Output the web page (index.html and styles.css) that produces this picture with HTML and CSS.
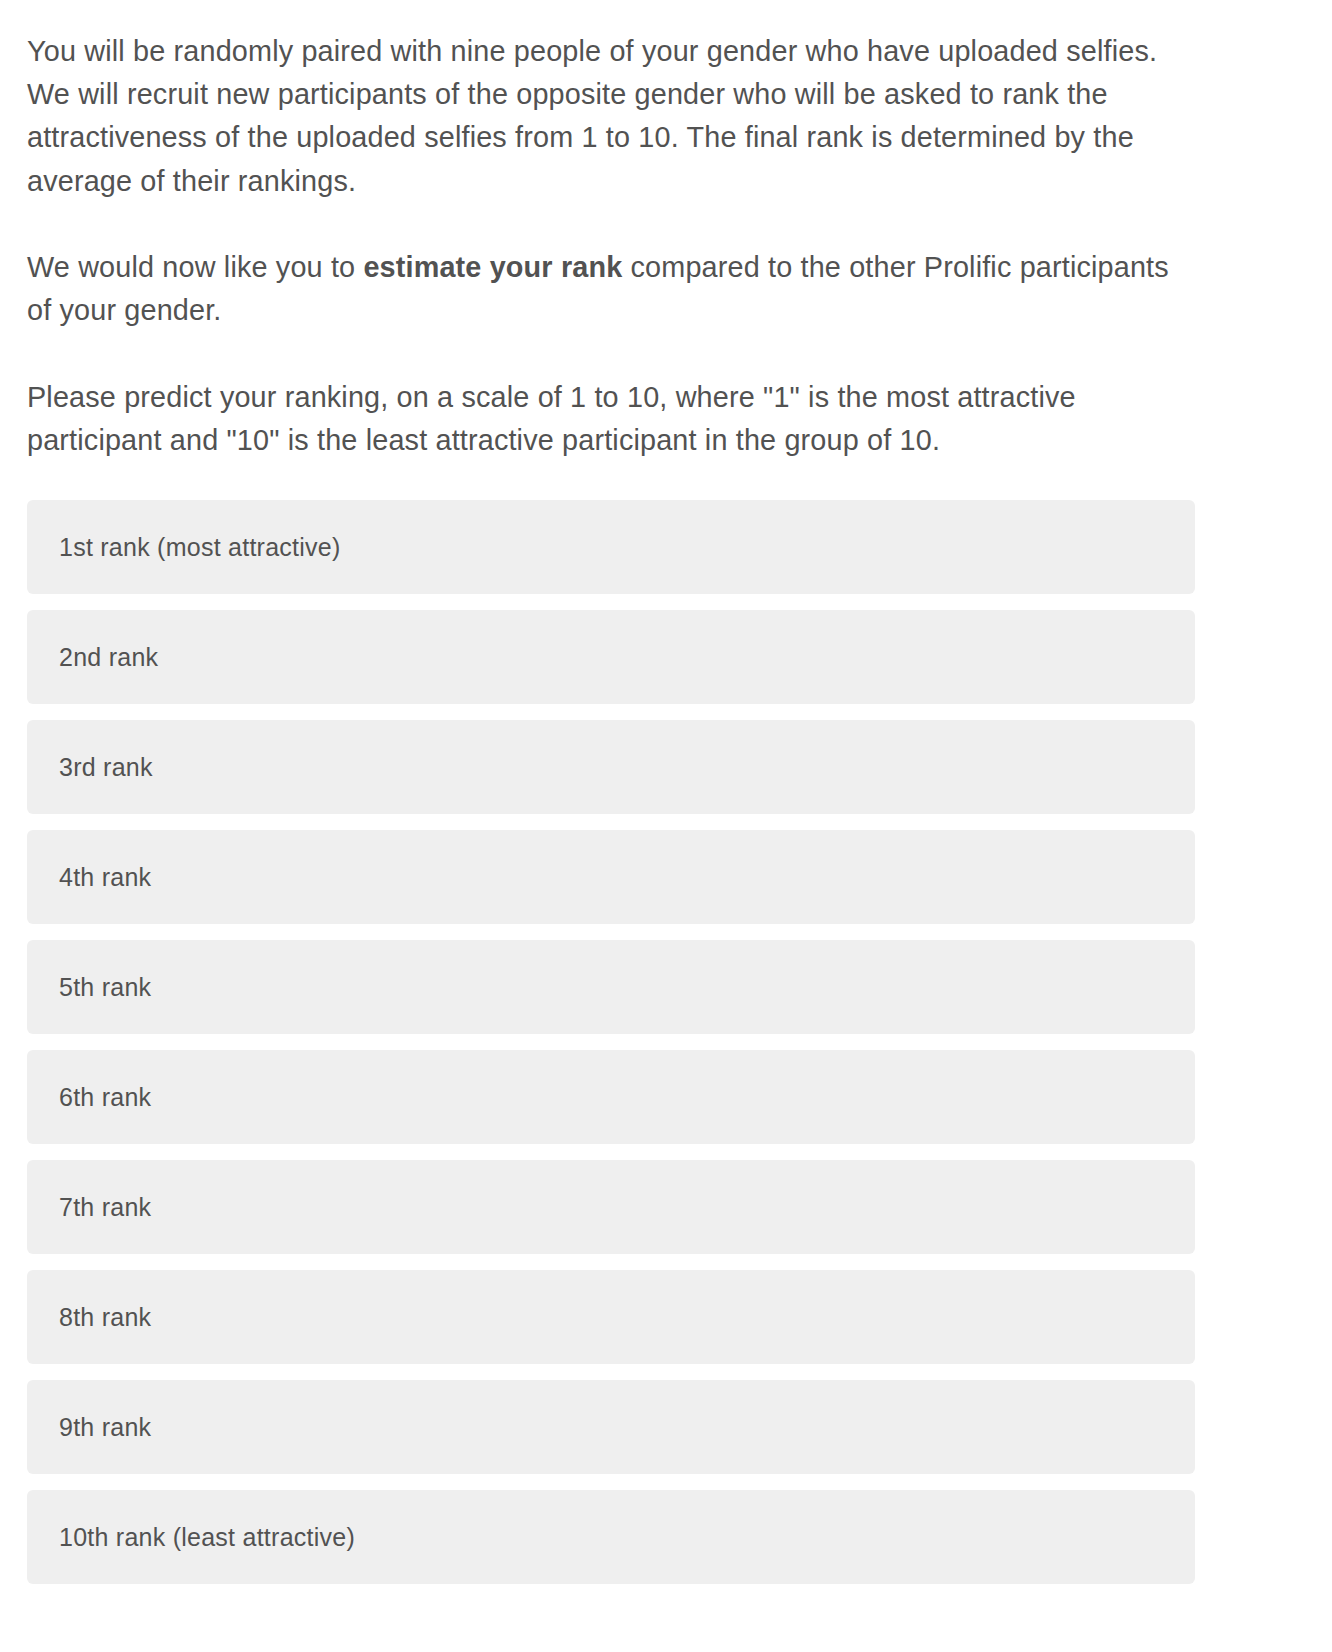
FILE: index.html
```html
<!DOCTYPE html>
<html lang="en">
<head>
<meta charset="utf-8">
<title>Estimate your rank</title>
<link rel="stylesheet" href="styles.css">
</head>
<body>
<main class="question">
  <div class="question-text">
    <p>You will be randomly paired with nine people of your gender who have uploaded selfies. We will recruit new participants of the opposite gender who will be asked to rank the attractiveness of the uploaded selfies from 1 to 10. The final rank is determined by the average of their rankings.</p>
    <p>We would now like you to <strong>estimate your rank</strong> compared to the other Prolific participants of your gender.</p>
    <p>Please predict your ranking, on a scale of 1 to 10, where "1" is the most attractive participant and "10" is the least attractive participant in the group of 10.</p>
  </div>
  <ul class="choices">
    <li class="choice">1st rank (most attractive)</li>
    <li class="choice">2nd rank</li>
    <li class="choice">3rd rank</li>
    <li class="choice">4th rank</li>
    <li class="choice">5th rank</li>
    <li class="choice">6th rank</li>
    <li class="choice">7th rank</li>
    <li class="choice">8th rank</li>
    <li class="choice">9th rank</li>
    <li class="choice">10th rank (least attractive)</li>
  </ul>
</main>
</body>
</html>
```
FILE: styles.css
```css
html, body {
  margin: 0;
  padding: 0;
  background: #ffffff;
}

body {
  font-family: "Liberation Sans", Arial, Helvetica, sans-serif;
  color: #525252;
}

.question {
  width: 1168px;
  padding: 30px 0 0 27px;
}

.question-text {
  display: flex;
  flex-direction: column;
  gap: 43.2px;
}

.question-text p {
  margin: 0;
  font-size: 28.8px;
  line-height: 43.2px;
  letter-spacing: 0.16px;
}

.question-text strong {
  font-weight: 700;
}

.choices {
  list-style: none;
  margin: 38px 0 0 0;
  padding: 0;
  display: flex;
  flex-direction: column;
  gap: 16px;
}

.choice {
  background: #efefef;
  border-radius: 6px;
  height: 94px;
  box-sizing: border-box;
  padding: 0 32px;
  display: flex;
  align-items: center;
  font-size: 25px;
  line-height: 36px;
  letter-spacing: 0.25px;
}
```
